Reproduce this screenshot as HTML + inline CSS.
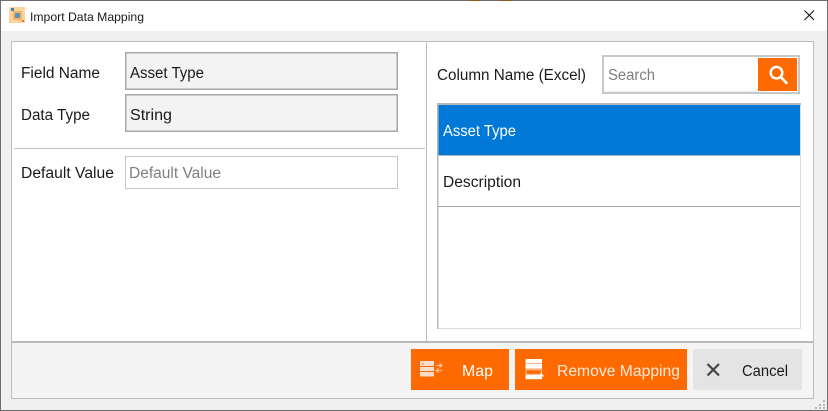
<!DOCTYPE html>
<html lang="en"><head><meta charset="utf-8"><title>Import Data Mapping</title>
<style>
html,body{margin:0;padding:0;width:828px;height:411px;overflow:hidden;background:#f0f0f0}
svg{display:block}
text{font-family:"Liberation Sans",sans-serif;font-size:15.3px;fill:#1a1a1a;white-space:pre}
</style></head><body>
<svg width="828" height="411" viewBox="0 0 828 411" xmlns="http://www.w3.org/2000/svg">
<rect width="828" height="411" fill="#f0f0f0"/>
<rect x="0" y="0" width="828" height="31" fill="#fff"/>
<rect x="0" y="0" width="828" height="1" fill="#6e6e6e"/>
<rect x="468" y="0" width="13" height="1" fill="#8a5a20"/><rect x="499" y="0" width="13" height="1" fill="#8a5a20"/>
<rect x="0" y="0" width="1" height="411" fill="#6e6e6e"/>
<rect x="827" y="0" width="1" height="411" fill="#6e6e6e"/>
<rect x="0" y="410" width="828" height="1" fill="#6e6e6e"/>
<!-- title icon -->
<rect x="9" y="7" width="16" height="16" fill="#fdd49a"/>
<rect x="13" y="11" width="9" height="9" fill="#f6b26a"/>
<rect x="15" y="13" width="5" height="5" fill="#5f93b5"/>
<rect x="11" y="8" width="3" height="3" fill="#4a7c9e"/>
<rect x="22" y="20" width="2" height="2" fill="#d9822b"/>
<text x="30" y="21" textLength="114" lengthAdjust="spacingAndGlyphs" style="font-size:12.4px">Import Data Mapping</text>
<path d="M804.5 10.5 L814 20 M814 10.5 L804.5 20" stroke="#111" stroke-width="1.1" fill="none"/>
<!-- main panel -->
<rect x="11.5" y="41.5" width="802" height="357" fill="#fff" stroke="#bdbdbd"/>
<rect x="12" y="343" width="801" height="55" fill="#f4f4f4"/>
<rect x="12" y="341" width="801" height="2" fill="#b9b9b9"/>
<rect x="426" y="42" width="1" height="299" fill="#bdbdbd"/>
<rect x="14" y="148" width="411" height="1" fill="#c0c0c0"/>
<!-- left fields -->
<text x="21" y="78" textLength="79" lengthAdjust="spacingAndGlyphs">Field Name</text>
<rect x="125.750" y="52.750" width="271.500" height="36.500" fill="#f3f3f3" stroke="#a8a8a8" stroke-width="1.500"/>
<text x="130" y="78" textLength="74" lengthAdjust="spacingAndGlyphs">Asset Type</text>
<text x="21" y="120" textLength="69" lengthAdjust="spacingAndGlyphs">Data Type</text>
<rect x="125.750" y="94.750" width="271.500" height="36.500" fill="#f3f3f3" stroke="#a8a8a8" stroke-width="1.500"/>
<text x="130" y="120" textLength="42" lengthAdjust="spacingAndGlyphs">String</text>
<text x="21" y="178" textLength="93" lengthAdjust="spacingAndGlyphs">Default Value</text>
<rect x="125.500" y="156.500" width="272" height="32" fill="#fff" stroke="#c4c4c4"/>
<text x="129" y="178" textLength="92" lengthAdjust="spacingAndGlyphs" style="fill:#7f7f7f">Default Value</text>
<!-- right header -->
<text x="437" y="80" textLength="149" lengthAdjust="spacingAndGlyphs">Column Name (Excel)</text>
<rect x="603" y="56" width="196" height="37" fill="#fff" stroke="#c8c8c8" stroke-width="2"/>
<rect x="605" y="91" width="153" height="1" fill="#eeeeee"/>
<text x="608" y="80" textLength="47" lengthAdjust="spacingAndGlyphs" style="fill:#7f7f7f">Search</text>
<rect x="758" y="58" width="39" height="33" fill="#ff6a00"/>
<circle cx="776.500" cy="72.700" r="5.800" fill="none" stroke="#fff" stroke-width="2.400"/>
<path d="M780.800 77 L786.500 83" stroke="#fff" stroke-width="2.700" stroke-linecap="round"/>
<!-- list -->
<rect x="437.500" y="103.500" width="363" height="225" fill="#fff" stroke="#dcdcdc"/>
<rect x="437" y="103" width="364" height="2" fill="#b8b8b8"/>
<rect x="437" y="103" width="1.500" height="226" fill="#b8b8b8"/>
<rect x="438.500" y="105" width="361.500" height="50" fill="#0078d7"/>
<rect x="438.500" y="155" width="361.500" height="1" fill="#a9b8c6"/>
<text x="443" y="136" textLength="73" lengthAdjust="spacingAndGlyphs" style="fill:#fff">Asset Type</text>
<text x="443" y="187" textLength="78" lengthAdjust="spacingAndGlyphs">Description</text>
<rect x="438.500" y="206" width="361.500" height="1" fill="#a8a8a8"/>
<!-- Map -->
<rect x="411" y="349" width="98" height="41" fill="#ff6a00"/>
<rect x="420" y="361" width="14" height="5" fill="#f6ddc9"/><rect x="420" y="367" width="14" height="4" fill="#f6ddc9"/><rect x="420" y="372" width="14" height="4.500" fill="#f6ddc9"/>
<rect x="422" y="363" width="1.500" height="1.500" fill="#e8883a"/>
<path d="M436 365.500 H442 M439.500 363.500 L442 365.500 L439.500 367.500 M442 370.500 H436 M438.500 368.500 L436 370.500 L438.500 372.500" stroke="#ffbe92" stroke-width="1.300" fill="none"/>
<text x="462" y="376" textLength="31" lengthAdjust="spacingAndGlyphs" style="fill:#fff">Map</text>
<!-- Remove -->
<rect x="515" y="349" width="172" height="41" fill="#ff6a00"/>
<rect x="525.500" y="359" width="16.500" height="4.500" fill="#fff"/><rect x="525.500" y="364" width="16.500" height="4.700" fill="#fff"/>
<rect x="526" y="369.800" width="15.500" height="4.500" fill="none" stroke="#ffc9a0" stroke-width="1"/>
<rect x="525.500" y="375" width="16.500" height="4.200" fill="#fff"/>
<path d="M540.500 372.500 L540.500 378 L542 376.500 L544.500 376.500 Z" fill="#fff"/>
<text x="557" y="376" textLength="123" lengthAdjust="spacingAndGlyphs" style="fill:#ffe9d9">Remove Mapping</text>
<!-- Cancel -->
<rect x="693" y="349" width="109" height="41" fill="#e4e4e4"/>
<path d="M707.500 364 L719 375.500 M719 364 L707.500 375.500" stroke="#444" stroke-width="2.200" fill="none"/>
<text x="742" y="376" textLength="46" lengthAdjust="spacingAndGlyphs">Cancel</text>
<!-- grip -->
<g fill="#b5b5b5"><rect x="823" y="400" width="2" height="2"/><rect x="819" y="404" width="2" height="2"/><rect x="823" y="404" width="2" height="2"/><rect x="815" y="407" width="2" height="2"/><rect x="819" y="407" width="2" height="2"/><rect x="823" y="407" width="2" height="2"/></g>
</svg>
</body></html>
